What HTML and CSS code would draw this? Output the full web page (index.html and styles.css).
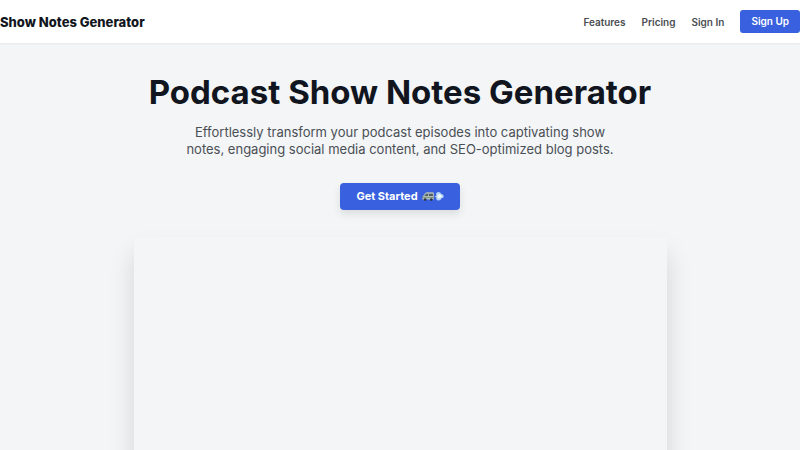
FILE: index.html
```html
<!DOCTYPE html>
<html lang="en">

<head>
    <meta charset="UTF-8">
    <meta name="viewport" content="width=device-width, initial-scale=1.0">
    <title>Show Notes Generator</title>
    <link rel="stylesheet" href="styles.css">
</head>

<body>
    <header class="navbar">
        <a class="nav-brand" href="#">Show Notes Generator</a>
        <nav class="nav-links">
            <a href="#features">Features</a>
            <a href="#pricing">Pricing</a>
            <a href="#signin">Sign In</a>
            <a class="signup-btn" href="#signup">Sign Up</a>
        </nav>
    </header>

    <main class="hero">
        <h1>Podcast Show Notes Generator</h1>
        <p>Effortlessly transform your podcast episodes into captivating show notes, engaging social media content, and
            SEO-optimized blog posts.</p>
        <button class="start-btn" type="button">
            Get Started
            <svg class="start-icon" viewBox="0 0 22 11" aria-hidden="true">
                <!-- van -->
                <path d="M0.3 8.6 L0.8 5.5 L3.3 2 Q3.9 1.2 5 1.2 H10.7 Q11.9 1.2 11.9 2.5 V8.6 Z" fill="#b3bcbc" />
                <path d="M2.3 4.9 L4.1 2.8 H6.2 V4.9 Z M7 2.8 H10.9 V4.9 H7 Z" fill="#50616a" />
                <path d="M0.5 6.3 H11.9 V7.1 H0.4 Z" fill="#71915f" />
                <circle cx="3.2" cy="8.6" r="1.3" fill="#2c3544" />
                <circle cx="9.3" cy="8.6" r="1.3" fill="#2c3544" />
                <!-- puff of air -->
                <path d="M12.6 5.6 L14.5 4.4 Q13.2 2.6 14.8 1.8 Q15.6 0.4 17.2 1.2 Q18.8 1 19 2.8 Q21.8 3.6 21.8 5.5 Q21.6 7.2 19.3 7.5 Q19 9.4 17.3 9.3 Q15.4 10.2 14.6 8.6 Q13.4 7.8 14.6 6.7 Z" fill="#b4d6f8" />
                <path d="M15.4 5.4 Q15.4 2.8 17.2 3.2 Q20.4 4 19.8 5.6 Q18.6 7.6 16.8 7.4 Q15.4 7.2 15.4 5.4 Z" fill="#eef8ff" />
            </svg>
        </button>
        <div class="demo-card"></div>
    </main>
</body>

</html>
```
FILE: styles.css
```css
* {
    margin: 0;
    padding: 0;
    box-sizing: border-box;
}

body {
    font-family: Inter, 'Liberation Sans', sans-serif;
    background: #f3f5f7;
    color: #111520;
    min-height: 100vh;
}

a {
    color: inherit;
    text-decoration: none;
}

.navbar {
    display: flex;
    justify-content: space-between;
    align-items: center;
    padding: 10px 0;
    background: white;
    box-shadow: 0 1px 2px rgba(0, 0, 0, 0.05);
}

.nav-brand {
    font-size: 13px;
    font-weight: 800;
}

.nav-links {
    display: flex;
    align-items: center;
    gap: 16px;
    font-size: 10px;
    font-weight: 600;
    color: #4a4d52;
}

.signup-btn {
    padding: 0 11px;
    border-radius: 3px;
    line-height: 23px;
    background: #3860df;
    color: white;
}

.hero {
    display: flex;
    flex-direction: column;
    align-items: center;
    padding: 28px 16px 48px;
    text-align: center;
}

.hero h1 {
    font-size: 33px;
    font-weight: 700;
    line-height: 42px;
}

.hero p {
    max-width: 448px;
    margin-top: 11px;
    font-size: 13px;
    line-height: 17px;
    color: #4a4f55;
}

.start-btn {
    display: flex;
    align-items: center;
    gap: 4px;
    margin-top: 25px;
    padding: 0 16px;
    border: none;
    border-radius: 4px;
    font-family: inherit;
    font-size: 11px;
    font-weight: 700;
    line-height: 27px;
    background: #3860df;
    color: white;
    box-shadow: 0 4px 8px rgba(0, 0, 0, 0.1);
    cursor: pointer;
}

.start-icon {
    width: 22px;
    height: 11px;
}

.demo-card {
    width: 100%;
    max-width: 533px;
    margin-top: 27px;
    aspect-ratio: 4 / 3;
    background: #f3f5f7;
    box-shadow: 0 16px 24px rgba(0, 0, 0, 0.13);
}
```
